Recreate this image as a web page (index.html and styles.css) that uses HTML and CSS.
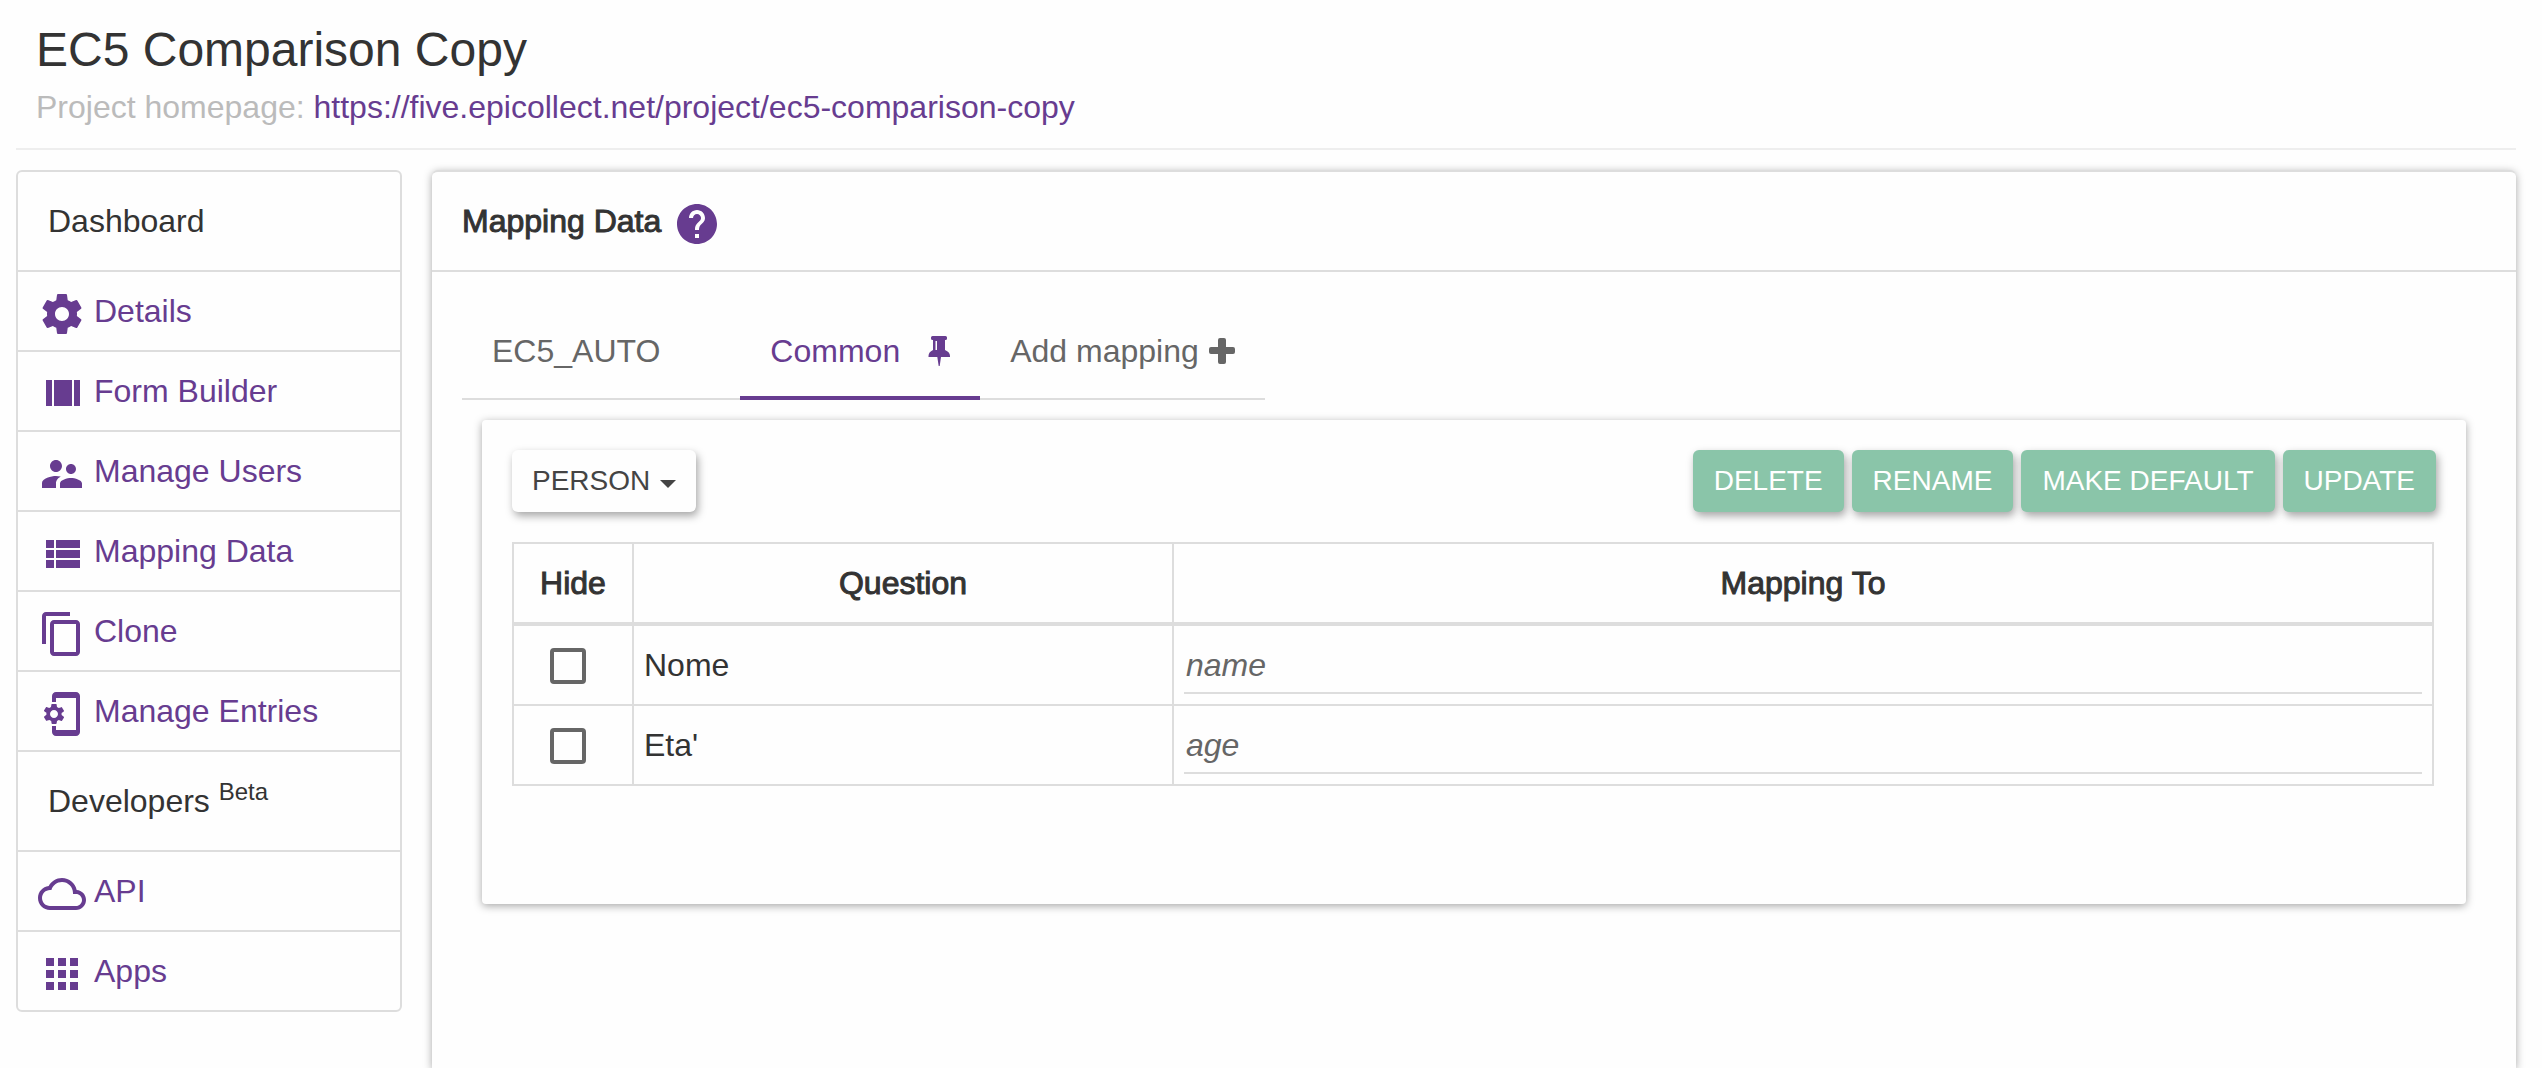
FILE: index.html
```html
<!DOCTYPE html>
<html lang="en">
<head>
<meta charset="utf-8">
<meta name="viewport" content="width=device-width, initial-scale=1">
<title>EC5 Comparison Copy - Mapping Data</title>
<link rel="stylesheet" href="styles.css">
</head>
<body>
<header class="page-header">
  <h1 class="page-title">EC5 Comparison Copy</h1>
  <p class="page-subtitle">Project homepage: <a href="https://five.epicollect.net/project/ec5-comparison-copy">https://five.epicollect.net/project/ec5-comparison-copy</a></p>
</header>
<div class="layout">
  <nav class="sidebar" aria-label="Project">
    <h2 class="sidebar-heading">Dashboard</h2>
    <a class="sidebar-link" href="#details"><svg class="icon" viewBox="0 0 24 24" aria-hidden="true"><path d="M19.43 12.98c.04-.32.07-.64.07-.98s-.03-.66-.07-.98l2.11-1.65c.19-.15.24-.42.12-.64l-2-3.46c-.12-.22-.39-.3-.61-.22l-2.49 1c-.52-.4-1.08-.73-1.69-.98l-.38-2.65C14.46 2.18 14.25 2 14 2h-4c-.25 0-.46.18-.49.42l-.38 2.65c-.61.25-1.17.59-1.69.98l-2.49-1c-.23-.09-.49 0-.61.22l-2 3.46c-.13.22-.07.49.12.64l2.11 1.65c-.04.32-.07.65-.07.98s.03.66.07.98l-2.11 1.65c-.19.15-.24.42-.12.64l2 3.46c.12.22.39.3.61.22l2.49-1c.52.4 1.08.73 1.69.98l.38 2.65c.03.24.24.42.49.42h4c.25 0 .46-.18.49-.42l.38-2.65c.61-.25 1.17-.59 1.69-.98l2.49 1c.23.09.49 0 .61-.22l2-3.46c.12-.22.07-.49-.12-.64l-2.11-1.65zM12 15.5c-1.93 0-3.5-1.57-3.5-3.5s1.57-3.5 3.5-3.5 3.5 1.57 3.5 3.5-1.57 3.5-3.5 3.5z"/></svg>Details</a>
    <a class="sidebar-link" href="#form-builder"><svg class="icon" viewBox="0 0 24 24" aria-hidden="true"><path d="M4 18h3V5H4v13zM18 5v13h3V5h-3zM8 18h9V5H8v13z"/></svg>Form Builder</a>
    <a class="sidebar-link" href="#manage-users"><svg class="icon" viewBox="0 0 24 24" aria-hidden="true"><path d="M16.5 12c1.38 0 2.49-1.12 2.49-2.5S17.88 7 16.5 7C15.12 7 14 8.12 14 9.5s1.12 2.5 2.5 2.5zM9 11c1.66 0 2.99-1.34 2.99-3S10.66 5 9 5C7.34 5 6 6.34 6 8s1.34 3 3 3zm7.5 3c-1.83 0-5.5.92-5.5 2.75V19h11v-2.25c0-1.83-3.67-2.75-5.5-2.75zM9 13c-2.33 0-7 1.17-7 3.5V19h7v-2.25c0-.85.33-2.34 2.37-3.47C10.5 13.1 9.66 13 9 13z"/></svg>Manage Users</a>
    <a class="sidebar-link" href="#mapping-data"><svg class="icon" viewBox="0 0 24 24" aria-hidden="true"><path d="M4 14h4v-4H4v4zm0 5h4v-4H4v4zM4 9h4V5H4v4zm5 5h12v-4H9v4zm0 5h12v-4H9v4zM9 5v4h12V5H9z"/></svg>Mapping Data</a>
    <a class="sidebar-link" href="#clone"><svg class="icon" viewBox="0 0 24 24" aria-hidden="true"><path d="M16 1H4c-1.1 0-2 .9-2 2v14h2V3h12V1zm3 4H8c-1.1 0-2 .9-2 2v14c0 1.1.9 2 2 2h11c1.1 0 2-.9 2-2V7c0-1.1-.9-2-2-2zm0 16H8V7h11v14z"/></svg>Clone</a>
    <a class="sidebar-link" href="#manage-entries"><svg class="icon" viewBox="0 0 24 24" aria-hidden="true"><path d="M11.8 12.5v-1l1.1-.8c.1-.1.1-.2.1-.3l-1-1.7c-.1-.1-.2-.2-.3-.1l-1.3.4c-.3-.2-.6-.4-.9-.5l-.2-1.3c0-.1-.1-.2-.3-.2H7c-.1 0-.2.1-.3.2l-.2 1.3c-.3.1-.6.3-.9.5l-1.3-.5c-.1 0-.2 0-.3.1l-1 1.7c-.1.1 0 .2.1.3l1.1.8v1l-1.1.8c-.1.2-.1.3-.1.4l1 1.7c.1.1.2.2.3.1l1.4-.4c.3.2.6.4.9.5l.2 1.3c-.1.1.1.2.2.2h2c.1 0 .2-.1.3-.2l.2-1.3c.3-.1.6-.3.9-.5l1.3.5c.1 0 .2 0 .3-.1l1-1.7c.1-.1 0-.2-.1-.3l-1.1-.9zM8 14c-1.1 0-2-.9-2-2s.9-2 2-2 2 .9 2 2-.9 2-2 2zM19 1H9c-1.1 0-2 .9-2 2v3h2V4h10v16H9v-2H7v3c0 1.1.9 2 2 2h10c1.1 0 2-.9 2-2V3c0-1.1-.9-2-2-2z"/></svg>Manage Entries</a>
    <h2 class="sidebar-heading">Developers <sup class="beta">Beta</sup></h2>
    <a class="sidebar-link" href="#api"><svg class="icon" viewBox="0 0 24 24" aria-hidden="true"><path d="M19.35 10.04C18.67 6.59 15.64 4 12 4 9.11 4 6.6 5.64 5.35 8.04 2.34 8.36 0 10.91 0 14c0 3.31 2.69 6 6 6h13c2.76 0 5-2.24 5-5 0-2.64-2.05-4.78-4.65-4.96zM19 18H6c-2.21 0-4-1.79-4-4s1.79-4 4-4h.71C7.37 7.69 9.48 6 12 6c3.04 0 5.5 2.46 5.5 5.5v.5H19c1.66 0 3 1.34 3 3s-1.34 3-3 3z"/></svg>API</a>
    <a class="sidebar-link" href="#apps"><svg class="icon" viewBox="0 0 24 24" aria-hidden="true"><path d="M4 8h4V4H4v4zm6 12h4v-4h-4v4zm-6 0h4v-4H4v4zm0-6h4v-4H4v4zm6 0h4v-4h-4v4zm6-10v4h4V4h-4zm-6 4h4V4h-4v4zm6 6h4v-4h-4v4zm0 6h4v-4h-4v4z"/></svg>Apps</a>
  </nav>
  <main class="panel">
    <div class="panel-heading">
      <h2 class="panel-title">Mapping Data</h2>
      <a class="help" href="#help" aria-label="Help"><svg class="icon" viewBox="0 0 24 24" aria-hidden="true"><path d="M12 2C6.48 2 2 6.48 2 12s4.48 10 10 10 10-4.48 10-10S17.52 2 12 2zm1 17h-2v-2h2v2zm2.07-7.75l-.9.92C13.45 12.9 13 13.5 13 15h-2v-.5c0-1.1.45-2.1 1.17-2.83l1.24-1.26c.37-.36.59-.86.59-1.41 0-1.1-.9-2-2-2s-2 .9-2 2H8c0-2.21 1.79-4 4-4s4 1.79 4 4c0 .88-.36 1.68-.93 2.25z"/></svg></a>
    </div>
    <div class="panel-body">
      <div class="tabs">
        <a class="tab tab-auto" href="#auto">EC5_AUTO</a>
        <a class="tab tab-active" href="#common" aria-current="page">Common
          <svg class="pin" viewBox="0 0 22 30" aria-hidden="true"><path d="M4.5 0H17.5Q19 0 19 1.5V2.5Q19 4 17.5 4H17V14Q22 16 22 20V21H13L11.7 30H10.7L9.3 21H.5V20Q.5 16 5 14V4H4.5Q3 4 3 2.5V1.5Q3 0 4.5 0Z"/><path class="pin-shine" d="M7.5 5H9V14H7.5Z"/></svg>
        </a>
        <a class="tab" href="#add">Add mapping
          <svg class="plus" viewBox="0 0 26 26" aria-hidden="true"><path d="M11 0H15Q17 0 17 2V9H24Q26 9 26 11V14Q26 16 24 16H17V24Q17 26 15 26H11Q9 26 9 24V16H2Q0 16 0 14V11Q0 9 2 9H9V2Q9 0 11 0Z"/></svg>
        </a>
      </div>
      <section class="card">
        <div class="toolbar">
          <button class="btn btn-default" type="button" aria-haspopup="true">PERSON<span class="caret"></span></button>
          <div class="actions">
            <button class="btn btn-action" type="button">DELETE</button>
            <button class="btn btn-action" type="button">RENAME</button>
            <button class="btn btn-action" type="button">MAKE DEFAULT</button>
            <button class="btn btn-action" type="button">UPDATE</button>
          </div>
        </div>
        <table class="mapping">
          <colgroup><col class="col-hide"><col class="col-question"><col></colgroup>
          <thead>
            <tr><th scope="col">Hide</th><th scope="col">Question</th><th scope="col">Mapping To</th></tr>
          </thead>
          <tbody>
            <tr>
              <td class="cell-hide"><input class="check" type="checkbox" aria-label="Hide Nome"></td>
              <td><label for="map-name">Nome</label></td>
              <td><input class="map-input" id="map-name" type="text" value="name"></td>
            </tr>
            <tr>
              <td class="cell-hide"><input class="check" type="checkbox" aria-label="Hide Eta'"></td>
              <td><label for="map-age">Eta'</label></td>
              <td><input class="map-input" id="map-age" type="text" value="age"></td>
            </tr>
          </tbody>
        </table>
      </section>
    </div>
  </main>
</div>
</body>
</html>
```

FILE: styles.css
```css
* {
  box-sizing: border-box;
}

html {
  background: #fefefe;
}

body {
  display: flex;
  flex-direction: column;
  height: 100vh;
  margin: 0;
  overflow: hidden;
  color: #333;
  font: 32px/46px "Liberation Sans", Arial, sans-serif;
}

a {
  color: #673c90;
  text-decoration: none;
}

h1,
h2,
p {
  margin: 0;
  font-weight: 400;
}

.icon {
  flex: none;
  width: 48px;
  height: 48px;
  margin-top: 6px;
  fill: #673c90;
}

/* Header */
.page-header {
  margin: 0 26px 0 16px;
  padding: 20px 20px 18px;
  border-bottom: 2px solid #eee;
}

.page-title {
  font-size: 48px;
  line-height: 60px;
}

.page-subtitle {
  padding-top: 4px;
  color: #bbb;
}

.layout {
  display: flex;
  flex: 1;
  align-items: flex-start;
  gap: 30px;
  padding: 20px 26px 0 16px;
}

/* Sidebar */
.sidebar {
  flex: none;
  width: 386px;
  border: 2px solid #ddd;
  border-radius: 6px;
}

.sidebar-heading {
  height: 98px;
  padding: 26px 30px;
  font-size: 32px;
}

.sidebar-link {
  display: flex;
  align-items: center;
  gap: 8px;
  height: 80px;
  padding: 0 20px;
  border-top: 2px solid #ddd;
}

.sidebar-link + .sidebar-heading {
  height: 100px;
  border-top: 2px solid #ddd;
}

.beta {
  font-size: 24px;
  line-height: 0;
}

/* Main panel */
.panel {
  flex: 1;
  align-self: stretch;
  min-width: 0;
  border-top: 2px solid #ddd;
  border-radius: 6px 6px 0 0;
  background: #fefefe;
  box-shadow: 0 2px 8px rgba(0, 0, 0, 0.35);
}

.panel-heading {
  display: flex;
  align-items: center;
  gap: 12px;
  height: 100px;
  padding: 0 30px;
  border-bottom: 2px solid #ddd;
}

.panel-title,
.mapping th {
  font-size: 32px;
  font-weight: 400;
  -webkit-text-stroke: 1px #333;
}

.help {
  display: flex;
}

.panel-body {
  padding: 48px 30px;
}

/* Tabs */
.tabs {
  display: flex;
  width: fit-content;
  border-bottom: 2px solid #ddd;
}

.tab {
  display: flex;
  align-items: center;
  height: 80px;
  margin-bottom: -2px;
  padding: 0 30px 14px;
  color: #666;
  border-bottom: 4px solid transparent;
}

.tab-auto {
  padding-right: 80px;
}

.tab-active {
  color: #673c90;
  border-bottom-color: #673c90;
}

.pin {
  width: 22px;
  height: 30px;
  margin-left: 28px;
  fill: #673c90;
}

.pin-shine {
  fill: #fefefe;
}

.plus {
  width: 26px;
  height: 26px;
  margin-left: 10px;
  fill: #666;
}

/* Mapping card */
.card {
  margin: 20px;
  min-height: 484px;
  padding: 30px;
  border-radius: 4px;
  background: #fefefe;
  box-shadow: 0 2px 8px rgba(0, 0, 0, 0.35);
}

.toolbar {
  display: flex;
  justify-content: space-between;
  margin-bottom: 30px;
}

.actions {
  display: flex;
  gap: 8px;
}

.btn {
  display: flex;
  align-items: center;
  height: 62px;
  padding: 0 20px;
  border: 0;
  border-radius: 6px;
  font: 28px/40px "Liberation Sans", Arial, sans-serif;
  box-shadow: 2px 4px 8px rgba(0, 0, 0, 0.35);
}

.btn-default {
  color: #444;
  background: #fefefe;
}

.btn-action {
  padding: 0 21px;
  color: #fff;
  background: #8ac5a9;
}

.caret {
  margin: 6px 0 0 10px;
  border: 8px solid transparent;
  border-top-color: #444;
  border-bottom-width: 0;
}

.mapping {
  width: calc(100% - 2px);
  table-layout: fixed;
  border-collapse: collapse;
}

.col-hide {
  width: 120px;
}

.col-question {
  width: 540px;
}

.mapping th,
.mapping td {
  padding: 10px;
  border: 2px solid #ddd;
}

.mapping th {
  height: 81px;
  border-bottom-width: 4px;
}

.mapping .cell-hide {
  padding-left: 36px;
}

.check {
  display: block;
  width: 36px;
  height: 36px;
  margin: 2px 0 0;
  border: 4px solid #666;
  border-radius: 4px;
  appearance: none;
}

.check:checked {
  background: #666;
}

.map-input {
  display: block;
  width: 100%;
  height: 58px;
  padding: 2px 2px 0;
  border: 0;
  border-bottom: 2px solid #ddd;
  color: #666;
  background: transparent;
  font: italic 32px/46px "Liberation Sans", Arial, sans-serif;
}
```
